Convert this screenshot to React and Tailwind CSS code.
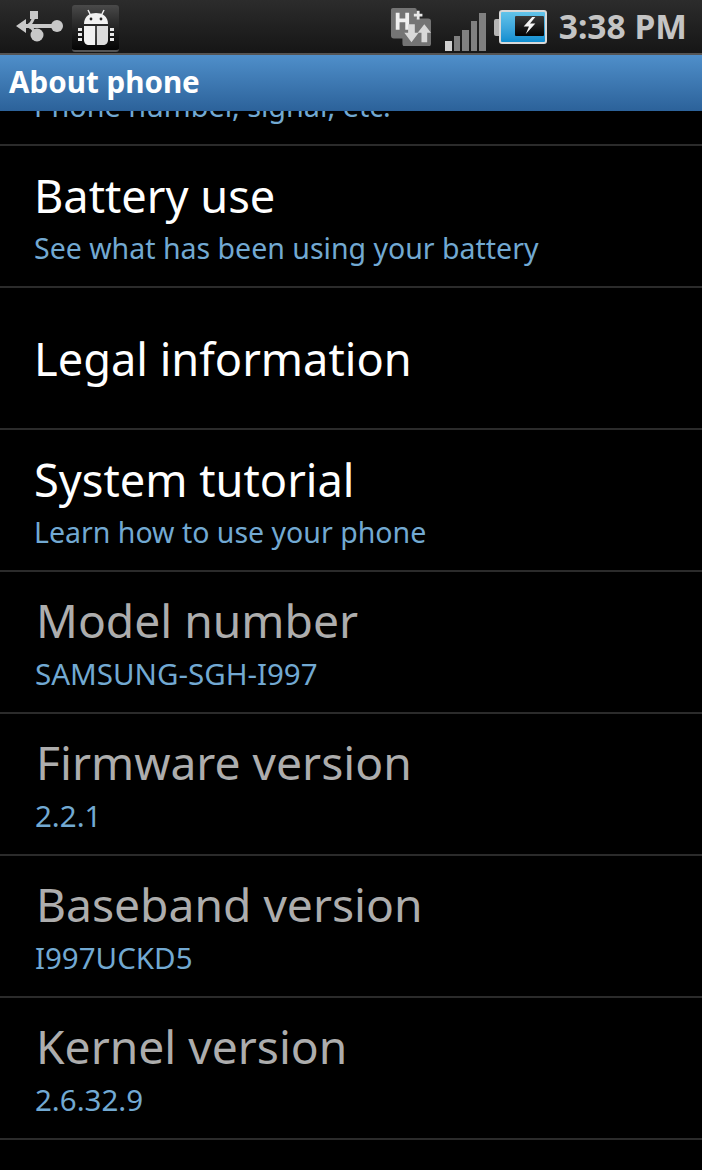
const rows = [
    { title: "Battery use", sub: "See what has been using your battery" },
    { title: "Legal information" },
    { title: "System tutorial", sub: "Learn how to use your phone" },
    { title: "Model number", sub: "SAMSUNG-SGH-I997", dim: true },
    { title: "Firmware version", sub: "2.2.1", dim: true },
    { title: "Baseband version", sub: "I997UCKD5", dim: true },
    { title: "Kernel version", sub: "2.6.32.9", dim: true },
]

function UsbIcon() {
    return (
        <svg width="48" height="34" viewBox="0 0 48 34">
            <path d="M0 16 L10 9 V14 H41 V18 H10 V23 Z" fill="#c8c8c8" />
            <path d="M12 15 C17 15 16 5 22 5 M13 17 C19 17 17 25 21 25" stroke="#c8c8c8" strokeWidth="3" fill="none" />
            <rect x="14" y="1" width="8" height="8" fill="#c8c8c8" />
            <circle cx="41" cy="16" r="6" fill="#c8c8c8" />
            <circle cx="21" cy="25" r="6.5" fill="#c8c8c8" />
        </svg>
    )
}

function AndroidIcon() {
    return (
        <div className="w-[47px] h-[47px] ml-[8px] mt-[5px] rounded-[3px] bg-gradient-to-b from-[#4a4a4a] to-[#050505] border-b-2 border-[#555] flex items-center justify-center">
            <svg width="38" height="40" viewBox="0 0 38 40">
                <path d="M11 2 L14 8 M27 2 L24 8" stroke="#eee" strokeWidth="1.5" />
                <path d="M7 16 C7 8 13 5 19 5 C25 5 31 8 31 16 Z" fill="#f2f2f2" />
                <circle cx="14" cy="11" r="1.4" fill="#222" />
                <circle cx="24" cy="11" r="1.4" fill="#222" />
                <path d="M7 18 H18.2 V37 H12 C9 37 7 35 7 32 Z" fill="#f2f2f2" />
                <path d="M19.8 18 H31 V32 C31 35 29 37 26 37 H19.8 Z" fill="#dcdcdc" />
                <path d="M1 20 H5 V23 H1 Z M1 25 H5 V28 H1 Z M1 30 H5 V33 H1 Z M33 20 H37 V23 H33 Z M33 25 H37 V28 H33 Z M33 30 H37 V33 H33 Z" fill="#e8e8e8" />
            </svg>
        </div>
    )
}

function NetworkIcon() {
    return (
        <svg width="42" height="40" viewBox="0 0 44 42">
            <path d="M3 1 H26 Q28 1 28 3 V12 H40 Q43 12 43 15 V38 Q43 41 41 41 H15 Q13 41 13 38 V33 H4 Q1 33 1 30 V3 Q1 1 3 1 Z" fill="#747474" />
            <path d="M6 6 H10 V12 H16 V6 H20 V24 H16 V16 H10 V24 H6 Z" fill="#f0f0f0" />
            <path d="M25 7 H28 V4 H31 V7 H34 V10 H31 V13 H28 V10 H25 Z" fill="#e8e8e8" />
            <path d="M19 18 H26 V27 H30 L22.5 37 L15 27 H19 Z" fill="#d8d8d8" />
            <path d="M36 18 L43 27 H39 V37 H33 V27 H29 Z" fill="#d8d8d8" />
        </svg>
    )
}

function SignalIcon() {
    return (
        <div className="flex items-end gap-[2px] h-[39px] ml-[13px] mt-[8px]">
            <div className="w-[6.5px] h-[10px] bg-[#d0d0d0]" />
            <div className="w-[6.5px] h-[15px] bg-[#808080]" />
            <div className="w-[6.5px] h-[21px] bg-[#808080]" />
            <div className="w-[6.5px] h-[30px] bg-[#808080]" />
            <div className="w-[6.5px] h-[38px] bg-[#808080]" />
        </div>
    )
}

function BatteryIcon() {
    return (
        <div className="flex items-center ml-[8px]">
            <div className="w-[5px] h-[17px] bg-[#b5b5b5] rounded-l-[2px]" />
            <div className="w-[48px] h-[34px] border-2 border-[#d8d8d8] rounded-[3px] bg-gradient-to-b from-[#62c4ea] to-[#0c8ed0] flex items-center justify-end pr-[1px] pb-[3px]">
                <div className="w-[29px] h-[20px] bg-gradient-to-b from-[#3a3a3a] to-[#050505] rounded-[1px] flex items-center justify-center">
                    <svg width="15" height="17" viewBox="0 0 13 16">
                        <path d="M9 0 L1 9 H6 L3 16 L12 6 H7 L12 0 Z" fill="#f5f5f5" />
                    </svg>
                </div>
            </div>
        </div>
    )
}

function Row({ title, sub, dim }) {
    return (
        <div className={`h-[142px] border-b-2 border-[#2b2b2b] pl-[34px] pr-[35px] flex flex-col justify-center ${dim ? "" : "pt-[1px]"}`}>
            <div className={`leading-[60px] ${dim ? "text-[46.2px] text-[#adadad] pl-[2px]" : "text-[45.2px] text-white"}`}>{title}</div>
            {sub && <div className={`leading-[40px] text-[#72a9d2] ${dim ? "text-[29.5px] pl-[1px] mt-[3px]" : "text-[28.5px] mt-[2px]"}`}>{sub}</div>}
        </div>
    )
}

export default function App() {
    return (
        <div className="w-[702px] h-[1170px] bg-black overflow-hidden font-['Noto_Sans','Open_Sans',sans-serif]">
            <div className="h-[53px] bg-gradient-to-b from-[#2c2c2c] to-[#161616] flex">
                <div className="pl-[16px] pt-[10px]"><UsbIcon /></div>
                <AndroidIcon />
                <div className="flex-1" />
                <div className="flex items-center pr-[15px] pt-[1px]">
                    <NetworkIcon />
                    <SignalIcon />
                    <BatteryIcon />
                    <div className="text-[33.6px] font-bold text-[#c4c4c4] ml-[12px] leading-none">3:38 PM</div>
                </div>
            </div>
            <div className="h-[2px] bg-[#555]" />
            <div className="h-[56px] bg-gradient-to-b from-[#4f8fca] to-[#2c629a] px-[9px] pb-[2px] flex items-center">
                <span className="text-[29.6px] font-bold text-white leading-none">About phone</span>
            </div>
            <div className="h-[35px] border-b-2 border-[#2b2b2b] overflow-hidden relative">
                <div className="absolute left-[34px] top-[-25px] text-[28.8px] leading-[40px] text-[#72a9d2]">Phone number, signal, etc.</div>
            </div>
            {rows.map((row) => (
                <Row key={row.title} {...row} />
            ))}
        </div>
    )
}
